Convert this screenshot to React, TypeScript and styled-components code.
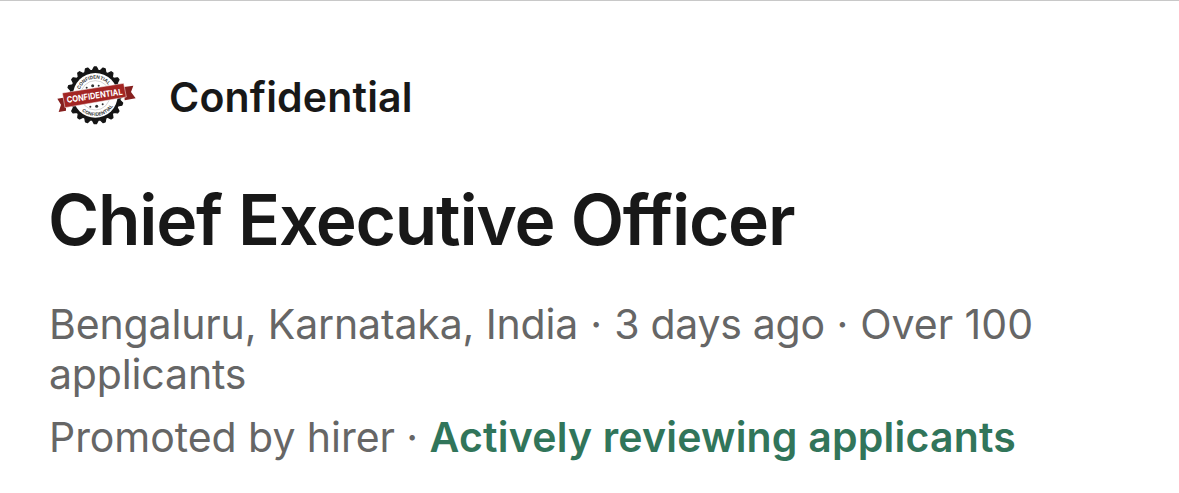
import React from "react";
import styled, { createGlobalStyle } from "styled-components";

const GlobalStyle = createGlobalStyle`
  * { box-sizing: border-box; }
  body { margin: 0; background: #fff; font-family: Inter, "Liberation Sans", sans-serif; }
`;
const Card = styled.main`
  height: 493px;
  overflow: hidden;
  padding: 57px 49px 0;
  border-top: 1px solid #c8c8c8;
  background: #fff;
`;
const Company = styled.header`
  display: flex;
  align-items: center;
  gap: 24px;
  height: 76px;
`;
const Logo = styled.svg`
  width: 96px;
  height: 76px;
  flex: none;
`;
const CompanyName = styled.span`
  padding-top: 2px;
  font-size: 41px;
  line-height: 52px;
  font-weight: 600;
  letter-spacing: 0.18px;
  color: #181818;
  white-space: nowrap;
`;
const Title = styled.h1`
  margin: 43px 0 0 -1px;
  font-size: 69.5px;
  line-height: 86px;
  height: 84px;
  font-weight: 600;
  letter-spacing: -1.25px;
  color: #181818;
  white-space: nowrap;
`;
const Line = styled.p<{ $top: number }>`
  margin: ${(p) => p.$top}px 0 0;
  font-size: 41px;
  line-height: 50px;
  color: #666;
  white-space: nowrap;
`;
const Run = styled.span<{ $track: number }>`
  letter-spacing: ${(p) => p.$track}px;
`;
const Status = styled.strong`
  font-weight: 600;
  letter-spacing: 0.2px;
  color: #31755a;
`;

const CX = 150;
const CY = 116;
const TEETH = 20;

const sealOutline = Array.from({ length: TEETH * 4 }, (_, i) => {
  const radius = i % 4 < 2 ? 85 : 75;
  const angle = ((i - 0.5) * Math.PI) / (TEETH * 2) - Math.PI / 2;
  return `${(CX + radius * Math.cos(angle)).toFixed(1)},${(CY + radius * Math.sin(angle)).toFixed(1)}`;
}).join(" ");

function ConfidentialSeal() {
  return (
    <Logo viewBox="11 4 288 228" role="img" aria-label="Confidential seal">
      <defs>
        <path id="arc-top" d="M100 116a50 50 0 0 1 100 0" />
        <path id="arc-bottom" d="M88 116a62 62 0 0 0 124 0" />
      </defs>
      <polygon points={sealOutline} fill="#151515" stroke="#151515" strokeWidth="4" strokeLinejoin="round" />
      <circle cx={CX} cy={CY} r="67" fill="#fff" />
      <circle cx={CX} cy={CY} r="44" fill="none" stroke="#aaa" strokeWidth="1.5" />
      <g
        transform={`rotate(-9 ${CX} ${CY})`}
        fontFamily="Inter, sans-serif"
        fontWeight="700"
        fill="#3a3a3a"
        textAnchor="middle"
      >
        <text fontSize="14" letterSpacing="0">
          <textPath href="#arc-top" startOffset="50%">CONFIDENTIAL</textPath>
        </text>
        <text fontSize="14" letterSpacing="0.2">
          <textPath href="#arc-bottom" startOffset="50%">CONFIDENTIAL</textPath>
        </text>
      </g>
      <g fill="#333">
        <circle cx="124" cy="93" r="3" />
        <circle cx="142" cy="87" r="4.5" />
        <circle cx="160" cy="87" r="3" />
        <circle cx="135" cy="150" r="3" />
        <circle cx="154" cy="149" r="4.5" />
        <circle cx="172" cy="143" r="3" />
      </g>
      <path d="M36 126L62 122V162L40 166L47 144Z" fill="#86201f" />
      <path d="M236 91L264 87L257 106L271 125L238 131Z" fill="#86201f" />
      <path d="M51 109L235 80L243 121L59 153Z" fill="#a32523" stroke="#fff" strokeWidth="1.5" />
      <text
        transform="translate(149 126) rotate(-8.5)"
        fontFamily="Inter, sans-serif"
        fontWeight="700"
        fontSize="25.5"
        textLength="169"
        lengthAdjust="spacingAndGlyphs"
        textAnchor="middle"
        fill="#fff"
      >
        CONFIDENTIAL
      </text>
    </Logo>
  );
}

export default function App() {
  return (
    <>
      <GlobalStyle />
      <Card>
        <Company>
          <ConfidentialSeal />
          <CompanyName>Confidential</CompanyName>
        </Company>
        <Title>Chief Executive Officer</Title>
        <Line $top={38}>
          <Run $track={-0.14}>Bengaluru, Karnataka, India</Run>
          <Run $track={0.4}> · </Run>
          <Run $track={-0.3}>3 days ago</Run>
          <Run $track={0.2}> · </Run>
          <Run $track={0}>Over 100</Run>
          <br />
          <Run $track={-0.15}>applicants</Run>
        </Line>
        <Line $top={13}>
          <Run $track={-0.05}>Promoted by hirer · </Run>
          <Status>Actively reviewing applicants</Status>
        </Line>
      </Card>
    </>
  );
}
